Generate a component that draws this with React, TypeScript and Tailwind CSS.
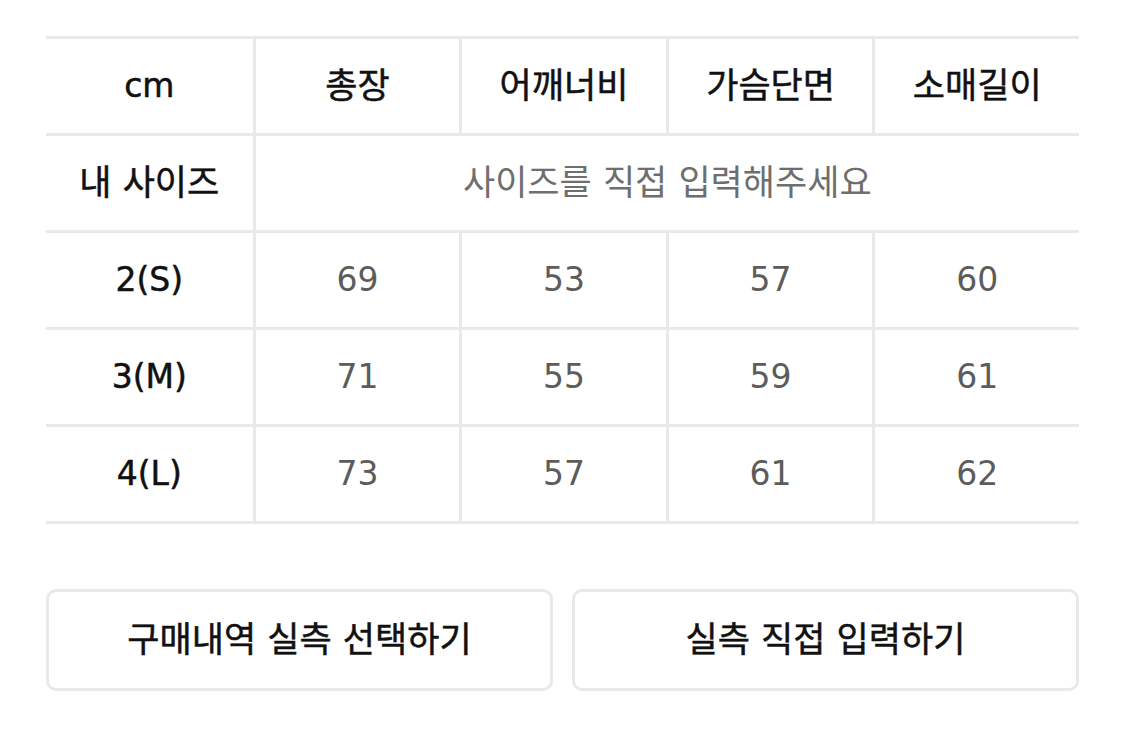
const columns = ["총장", "어깨너비", "가슴단면", "소매길이"];

const sizes = [
  { label: "2(S)", values: ["69", "53", "57", "60"] },
  { label: "3(M)", values: ["71", "55", "59", "61"] },
  { label: "4(L)", values: ["73", "57", "61", "62"] },
];

const font = { fontFamily: '"DejaVu Sans", "Noto Sans CJK KR", sans-serif' };

// heading text: a touch heavier than regular, lighter than bold
const heavy = "text-[#111] [-webkit-text-stroke:0.5px_#111]";

export default function App() {
  return (
    <div className="min-h-screen bg-white px-[46px] pt-[36px]" style={font}>
      {/* Size table */}
      <div className="w-[1033px] border-t-[3px] border-[#e9e9e9]">
        {/* Header */}
        <div className="grid grid-cols-5 h-[97px] border-b-[3px] border-[#e9e9e9]">
          <div className={`flex items-center justify-center text-[33px] ${heavy}`}>cm</div>
          {columns.map((c) => (
            <div
              key={c}
              className={`flex items-center justify-center border-l-[3px] border-[#e9e9e9] text-[35px] ${heavy}`}
            >
              {c}
            </div>
          ))}
        </div>

        {/* My size */}
        <div className="grid grid-cols-5 h-[97px] border-b-[3px] border-[#e9e9e9]">
          <div className={`flex items-center justify-center text-[35px] ${heavy}`}>내 사이즈</div>
          <div className="col-span-4 flex items-center justify-center border-l-[3px] border-[#e9e9e9] text-[35px] text-[#6e6e6e]">
            사이즈를 직접 입력해주세요
          </div>
        </div>

        {/* Sizes */}
        {sizes.map((s) => (
          <div key={s.label} className="grid grid-cols-5 h-[97px] border-b-[3px] border-[#e9e9e9]">
            <div className={`flex items-center justify-center text-[33px] ${heavy}`}>{s.label}</div>
            {s.values.map((v, i) => (
              <div
                key={i}
                className="flex items-center justify-center border-l-[3px] border-[#e9e9e9] text-[33px] text-[#5c5c5c]"
              >
                {v}
              </div>
            ))}
          </div>
        ))}
      </div>

      {/* Buttons */}
      <div className="mt-[65px] flex w-[1033px] gap-[19px]">
        <button className={`flex h-[102px] flex-1 items-center justify-center rounded-[10px] border-[3px] border-[#e9e9e9] bg-white text-[35px] ${heavy}`}>
          구매내역 실측 선택하기
        </button>
        <button className={`flex h-[102px] flex-1 items-center justify-center rounded-[10px] border-[3px] border-[#e9e9e9] bg-white text-[35px] ${heavy}`}>
          실측 직접 입력하기
        </button>
      </div>
    </div>
  );
}
